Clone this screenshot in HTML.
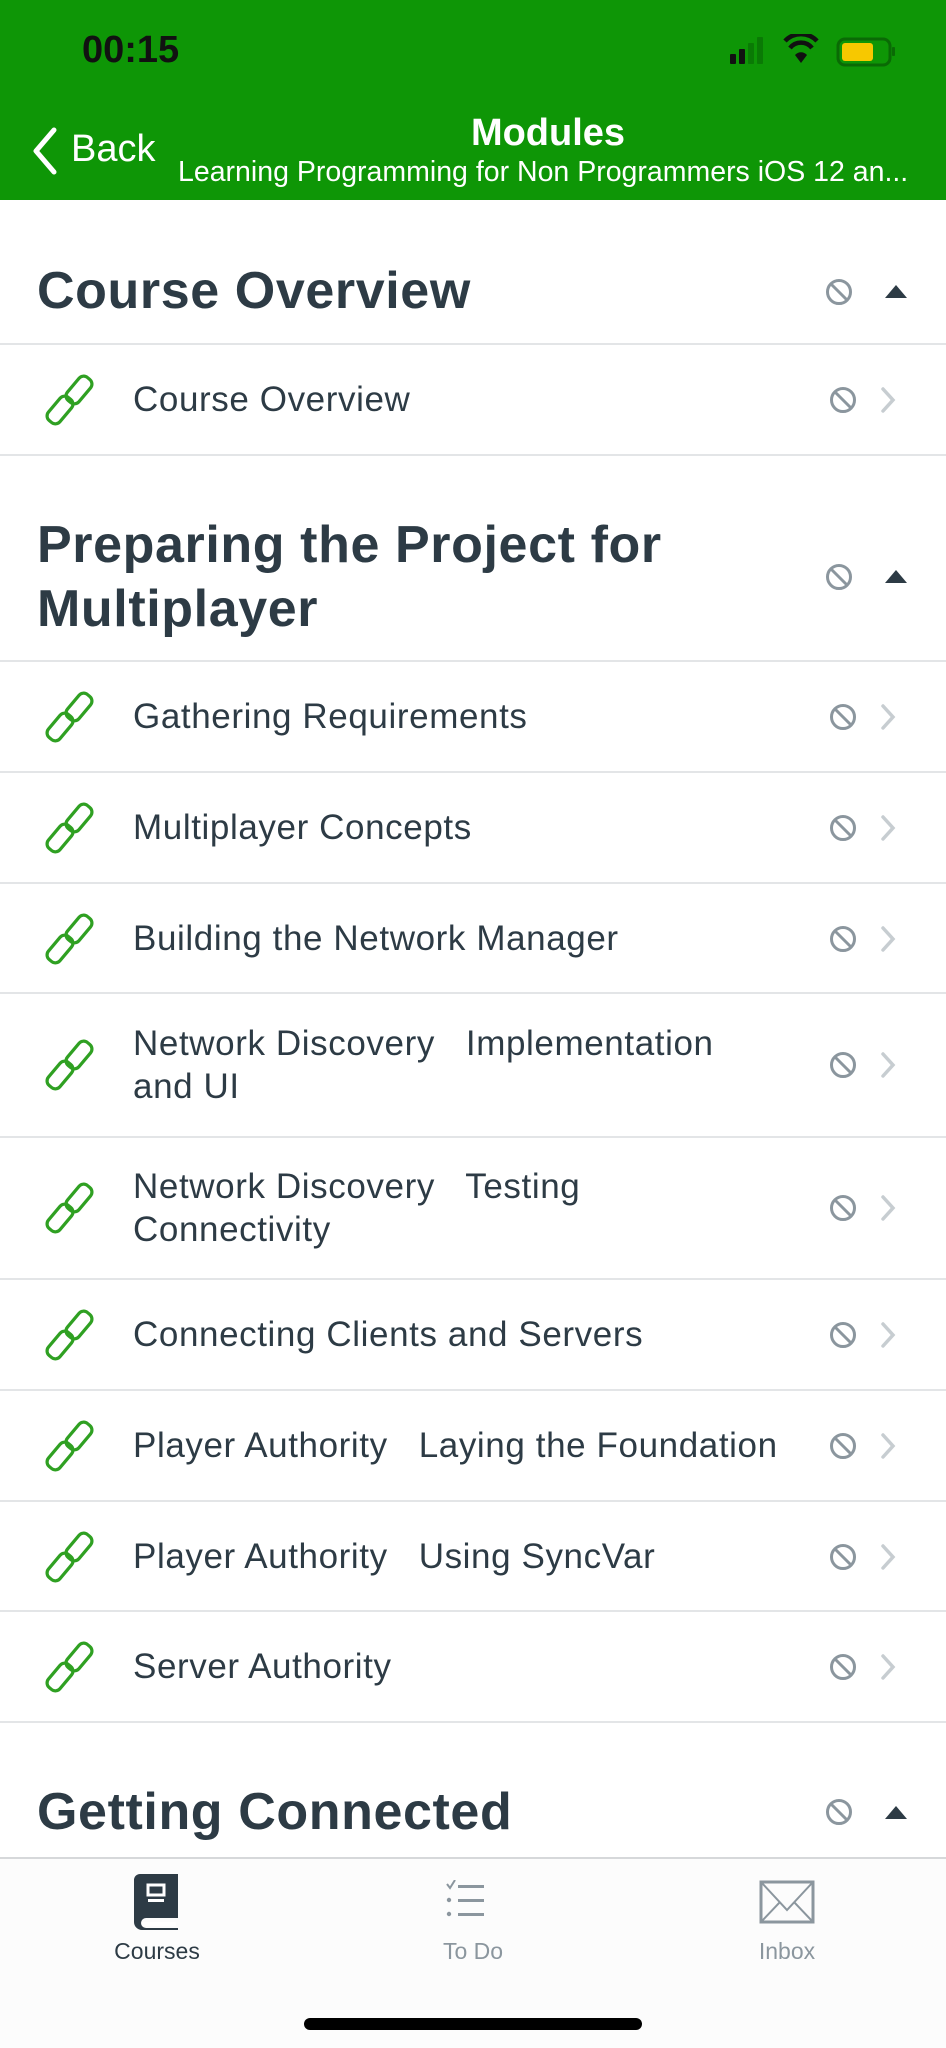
<!DOCTYPE html>
<html><head><meta charset="utf-8"><style>
*{margin:0;padding:0;box-sizing:border-box}
body{width:946px;height:2048px;background:#fff;font-family:"Liberation Sans",sans-serif;position:relative;overflow:hidden;color:#2d3b45}
.abs{position:absolute}
.hdr{left:0;top:0;width:946px;height:200px;background:#0e9606}
.sec{position:absolute;left:37px;font-weight:bold;font-size:52px;line-height:64px;color:#2d3b45;letter-spacing:0.6px;white-space:nowrap}
.line{position:absolute;left:0;width:946px;height:2px;background:#e3e5e7}
.row{position:absolute;left:0;width:946px;display:flex;align-items:center}
.row .t{position:absolute;left:133px;font-size:35px;line-height:43px;white-space:pre;color:#2d3b45;letter-spacing:0.6px}
.link{position:absolute;left:42px}
.blk{position:absolute}
.chev{position:absolute;left:878px}
.tri{position:absolute;left:885px;width:0;height:0;border-left:11px solid transparent;border-right:11px solid transparent;border-bottom:13px solid #2d3b45}
</style></head><body>
<div class="abs hdr"></div>
<div class="abs" style="left:82px;top:29px;font-size:38px;font-weight:bold;color:#111">00:15</div>
<svg class="abs" style="left:728px;top:34px" width="170" height="34" viewBox="0 0 170 34">
<rect x="2" y="20" width="6" height="10" rx="1" fill="#111"/>
<rect x="11" y="15" width="6" height="15" rx="1" fill="#111"/>
<rect x="20" y="9" width="6" height="21" rx="1" fill="#0a7a05"/>
<rect x="29" y="3" width="6" height="27" rx="1" fill="#0a7a05"/>
<path d="M57 7 a22 22 0 0 1 32 0" stroke="#111" stroke-width="4.5" fill="none"/>
<path d="M62 14 a14 14 0 0 1 22 0" stroke="#111" stroke-width="4.5" fill="none"/>
<path d="M67 21 l6 8 l6 -8 a8 8 0 0 0 -12 0z" fill="#111"/>
<rect x="110" y="5" width="52" height="26" rx="7" fill="none" stroke="#0a6a05" stroke-width="3"/>
<rect x="114" y="9" width="31" height="18" rx="3" fill="#f7c800"/>
<rect x="164" y="13" width="3" height="9" rx="1" fill="#0a6a05"/>
</svg>
<svg class="abs" style="left:28px;top:126px" width="34" height="50" viewBox="0 0 34 50"><path d="M26 4 L8 25 L26 46" stroke="#fff" stroke-width="5" fill="none" stroke-linecap="round" stroke-linejoin="round"/></svg>
<div class="abs" style="left:71px;top:128px;font-size:38px;color:#fff">Back</div>
<div class="abs" style="left:0;width:1096px;top:112px;text-align:center;font-size:38px;font-weight:bold;color:#fff">Modules</div>
<div class="abs" style="left:178px;top:156px;font-size:28.5px;color:#fff;white-space:nowrap">Learning Programming for Non Programmers iOS 12 an...</div>

<svg width="0" height="0" style="position:absolute">
<defs>
<symbol id="lk" viewBox="0 0 56 56"><g fill="none" stroke="#2fa022" stroke-width="3.2">
<rect x="-15" y="-7.5" width="30" height="15" rx="6" transform="translate(18 38) rotate(-50)"/>
<rect x="-15" y="-7.5" width="30" height="15" rx="6" transform="translate(37 18) rotate(-50)"/>
</g></symbol>
<symbol id="no" viewBox="0 0 30 30"><circle cx="15" cy="15" r="11.5" fill="none" stroke="#8b969e" stroke-width="3"/><path d="M7 7 L23 23" stroke="#8b969e" stroke-width="3"/></symbol>
<symbol id="ch" viewBox="0 0 20 30"><path d="M5 4 L15 15 L5 26" fill="none" stroke="#c7cdd1" stroke-width="3.5" stroke-linecap="round"/></symbol>
</defs></svg>

<div class="sec" style="top:259px">Course Overview</div>
<svg class="blk" style="left:824px;top:277px" width="30" height="30"><use href="#no"/></svg>
<div class="tri" style="top:285px"></div>
<div class="line" style="top:343px"></div>
<div class="row" style="top:344px;height:111px"><svg class="link" width="56" height="56" style="top:28px"><use href="#lk"/></svg><div class="t">Course Overview</div><svg class="blk" style="left:828px;top:41px" width="30" height="30"><use href="#no"/></svg><svg class="chev" style="top:41px" width="20" height="30"><use href="#ch"/></svg></div>
<div class="line" style="top:454px"></div>

<div class="sec" style="top:513px">Preparing the Project for<br>Multiplayer</div>
<svg class="blk" style="left:824px;top:562px" width="30" height="30"><use href="#no"/></svg>
<div class="tri" style="top:570px"></div>
<div class="line" style="top:660px"></div>

<div class="row" style="top:661px;height:111px"><svg class="link" width="56" height="56" style="top:28px"><use href="#lk"/></svg><div class="t">Gathering Requirements</div><svg class="blk" style="left:828px;top:41px" width="30" height="30"><use href="#no"/></svg><svg class="chev" style="top:41px" width="20" height="30"><use href="#ch"/></svg></div>
<div class="line" style="top:771px"></div>
<div class="row" style="top:772px;height:111px"><svg class="link" width="56" height="56" style="top:28px"><use href="#lk"/></svg><div class="t">Multiplayer Concepts</div><svg class="blk" style="left:828px;top:41px" width="30" height="30"><use href="#no"/></svg><svg class="chev" style="top:41px" width="20" height="30"><use href="#ch"/></svg></div>
<div class="line" style="top:882px"></div>
<div class="row" style="top:883px;height:110px"><svg class="link" width="56" height="56" style="top:28px"><use href="#lk"/></svg><div class="t">Building the Network Manager</div><svg class="blk" style="left:828px;top:41px" width="30" height="30"><use href="#no"/></svg><svg class="chev" style="top:41px" width="20" height="30"><use href="#ch"/></svg></div>
<div class="line" style="top:992px"></div>
<div class="row" style="top:993px;height:144px"><svg class="link" width="56" height="56" style="top:44px"><use href="#lk"/></svg><div class="t">Network Discovery   Implementation
and UI</div><svg class="blk" style="left:828px;top:57px" width="30" height="30"><use href="#no"/></svg><svg class="chev" style="top:57px" width="20" height="30"><use href="#ch"/></svg></div>
<div class="line" style="top:1136px"></div>
<div class="row" style="top:1137px;height:142px"><svg class="link" width="56" height="56" style="top:43px"><use href="#lk"/></svg><div class="t">Network Discovery   Testing
Connectivity</div><svg class="blk" style="left:828px;top:56px" width="30" height="30"><use href="#no"/></svg><svg class="chev" style="top:56px" width="20" height="30"><use href="#ch"/></svg></div>
<div class="line" style="top:1278px"></div>
<div class="row" style="top:1279px;height:111px"><svg class="link" width="56" height="56" style="top:28px"><use href="#lk"/></svg><div class="t">Connecting Clients and Servers</div><svg class="blk" style="left:828px;top:41px" width="30" height="30"><use href="#no"/></svg><svg class="chev" style="top:41px" width="20" height="30"><use href="#ch"/></svg></div>
<div class="line" style="top:1389px"></div>
<div class="row" style="top:1390px;height:111px"><svg class="link" width="56" height="56" style="top:28px"><use href="#lk"/></svg><div class="t">Player Authority   Laying the Foundation</div><svg class="blk" style="left:828px;top:41px" width="30" height="30"><use href="#no"/></svg><svg class="chev" style="top:41px" width="20" height="30"><use href="#ch"/></svg></div>
<div class="line" style="top:1500px"></div>
<div class="row" style="top:1501px;height:110px"><svg class="link" width="56" height="56" style="top:28px"><use href="#lk"/></svg><div class="t">Player Authority   Using SyncVar</div><svg class="blk" style="left:828px;top:41px" width="30" height="30"><use href="#no"/></svg><svg class="chev" style="top:41px" width="20" height="30"><use href="#ch"/></svg></div>
<div class="line" style="top:1610px"></div>
<div class="row" style="top:1611px;height:111px"><svg class="link" width="56" height="56" style="top:28px"><use href="#lk"/></svg><div class="t">Server Authority</div><svg class="blk" style="left:828px;top:41px" width="30" height="30"><use href="#no"/></svg><svg class="chev" style="top:41px" width="20" height="30"><use href="#ch"/></svg></div>
<div class="line" style="top:1721px"></div>

<div class="sec" style="top:1780px">Getting Connected</div>
<svg class="blk" style="left:824px;top:1797px" width="30" height="30"><use href="#no"/></svg>
<div class="tri" style="top:1806px"></div>

<div class="abs" style="left:0;top:1857px;width:946px;height:191px;background:#fcfcfc;border-top:2px solid #d6d8da"></div>
<svg class="abs" style="left:132px;top:1872px" width="52" height="60" viewBox="0 0 52 60">
<path d="M8 2 H46 V46 H14 a5 5 0 0 0 0 10 H46 V58 H10 a8 8 0 0 1 -8 -8 V8 a6 6 0 0 1 6 -6z" fill="#2d3b45"/>
<rect x="10" y="50" width="34" height="4" fill="#fff" rx="1"/>
<rect x="16" y="13" width="16" height="10" fill="none" stroke="#fff" stroke-width="3"/>
<rect x="16" y="27" width="16" height="3" fill="#fff"/>
</svg>
<div class="abs" style="left:0;width:314px;top:1938px;text-align:center;font-size:23px;color:#2d3b45">Courses</div>
<svg class="abs" style="left:444px;top:1880px" width="52" height="50" viewBox="0 0 52 50">
<path d="M3 4 l3 4 l5 -8" stroke="#8b969e" stroke-width="2" fill="none"/>
<rect x="14" y="5" width="26" height="3" fill="#8b969e"/>
<circle cx="5" cy="20" r="2.2" fill="#8b969e"/><rect x="14" y="19" width="26" height="3" fill="#8b969e"/>
<circle cx="5" cy="34" r="2.2" fill="#8b969e"/><rect x="14" y="33" width="26" height="3" fill="#8b969e"/>
</svg>
<div class="abs" style="left:316px;width:314px;top:1938px;text-align:center;font-size:23px;color:#8b969e">To Do</div>
<svg class="abs" style="left:758px;top:1879px" width="58" height="46" viewBox="0 0 58 46">
<rect x="3" y="3" width="52" height="40" fill="none" stroke="#8b969e" stroke-width="3"/>
<path d="M3 3 L29 31 L55 3 M3 43 L22 23 M55 43 L36 23" stroke="#8b969e" stroke-width="2" fill="none"/>
</svg>
<div class="abs" style="left:630px;width:314px;top:1938px;text-align:center;font-size:23px;color:#8b969e">Inbox</div>
<div class="abs" style="left:304px;top:2018px;width:338px;height:12px;border-radius:6px;background:#000"></div>
</body></html>
